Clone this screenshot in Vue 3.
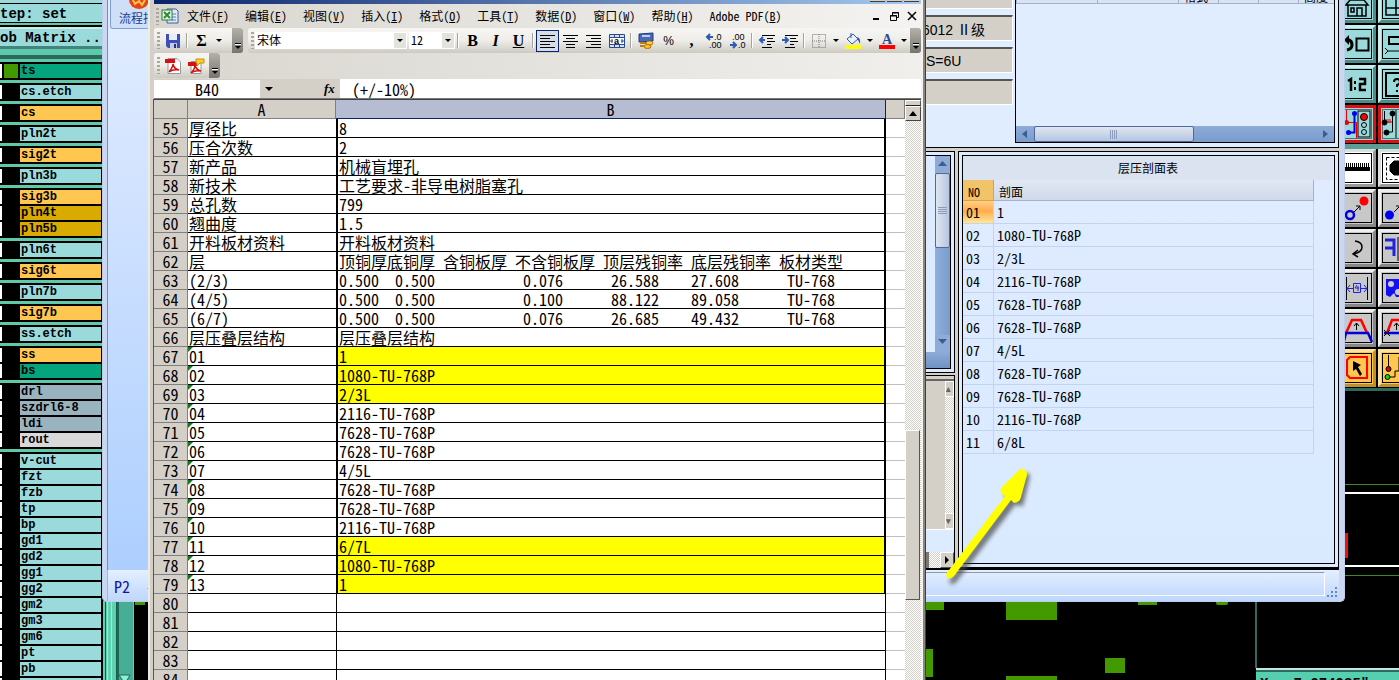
<script setup>
const layerGroups = [
  [['ts', 'signal']],
  [['cs.etch', 'plain']],
  [['cs', 'copper']],
  [['pln2t', 'plain']],
  [['sig2t', 'copper']],
  [['pln3b', 'plain']],
  [['sig3b', 'copper'], ['pln4t', 'power'], ['pln5b', 'power']],
  [['pln6t', 'plain']],
  [['sig6t', 'copper']],
  [['pln7b', 'plain']],
  [['sig7b', 'copper']],
  [['ss.etch', 'plain']],
  [['ss', 'copper'], ['bs', 'signal']],
  [['drl', 'drill'], ['szdrl6-8', 'drill'], ['ldi', 'drill'], ['rout', 'rout']],
  ['v-cut', 'fzt', 'fzb', 'tp', 'bp', 'gd1', 'gd2', 'gg1', 'gg2', 'gm2', 'gm3', 'gm6', 'pt', 'pb', ''].map((n) => [n, 'plain']),
]

const menus = [
  ['文件', 'F'], ['编辑', 'E'], ['视图', 'V'], ['插入', 'I'], ['格式', 'O'],
  ['工具', 'T'], ['数据', 'D'], ['窗口', 'W'], ['帮助', 'H'], ['Adobe PDF', 'B'],
]

const gap = (n) => ' '.repeat(n)
const board = (a, b, c) => '0.500' + gap(2) + '0.500' + gap(11) + a + gap(6) + b + gap(4) + c + gap(6) + 'TU-768'

const cells = [
  ['厚径比', '8'],
  ['压合次数', '2'],
  ['新产品', '机械盲埋孔'],
  ['新技术', '工艺要求-非导电树脂塞孔'],
  ['总孔数', '799'],
  ['翘曲度', '1.5'],
  ['开料板材资料', '开料板材资料'],
  ['层', '顶铜厚底铜厚 含铜板厚 不含铜板厚 顶层残铜率 底层残铜率 板材类型'],
  ['(2/3)', board('0.076', '26.588', '27.608')],
  ['(4/5)', board('0.100', '88.122', '89.058')],
  ['(6/7)', board('0.076', '26.685', '49.432')],
  ['层压叠层结构', '层压叠层结构'],
  ['01', '1'],
  ['02', '1080-TU-768P'],
  ['03', '2/3L'],
  ['04', '2116-TU-768P'],
  ['05', '7628-TU-768P'],
  ['06', '7628-TU-768P'],
  ['07', '4/5L'],
  ['08', '7628-TU-768P'],
  ['09', '7628-TU-768P'],
  ['10', '2116-TU-768P'],
  ['11', '6/7L'],
  ['12', '1080-TU-768P'],
  ['13', '1'],
  ['', ''], ['', ''], ['', ''], ['', ''], ['', ''],
]
const highlighted = [67, 68, 69, 77, 78, 79]
const rows = cells.map(([a, b], i) => {
  const no = 55 + i
  return { no, a, b, mark: no >= 67 && no <= 79, hot: highlighted.includes(no), tail: no > 79 }
})

const sections = ['1', '1080-TU-768P', '2/3L', '2116-TU-768P', '7628-TU-768P', '7628-TU-768P', '4/5L', '7628-TU-768P', '7628-TU-768P', '2116-TU-768P', '6/8L']
  .map((v, i) => [String(i + 1).padStart(2, '0'), v])
</script>

<template>
  <div class="desktop">
    <svg class="cad" width="1399" height="680" aria-hidden="true">
      <g fill="#439a00">
        <rect x="135" y="601" width="10" height="4" />
        <rect x="926" y="601" width="18" height="9" />
        <rect x="1006" y="601" width="51" height="19" />
        <rect x="926" y="649" width="7" height="28" />
        <rect x="1105" y="658" width="20" height="15" />
        <rect x="1006" y="676" width="51" height="4" />
        <rect x="1138" y="600" width="19" height="5" />
        <rect x="1216" y="600" width="12" height="5" rx="2" />
      </g>
      <path d="M1340 484.500H1399M1340 575.500H1399" stroke="#3f8a20" />
      <path d="M1340 493H1399M1340 566H1399" stroke="#fff" stroke-width="2" />
      <rect x="1340" y="533" width="8" height="25" fill="#f01010" />
      <path d="M1256 600V668" stroke="#2f6a60" stroke-width="2" />
      <rect x="103" y="601" width="31" height="79" fill="#5fd0b0" />
      <path d="M105.500 601V680M116.500 601V680" stroke="#175a4a" />
      <path d="M107.500 601V680M111.500 601V680" stroke="#8ff0d4" />
      <rect x="118" y="601" width="15" height="79" fill="#47ad95" />
      <path d="M118 601V680" stroke="#1d6a5a" stroke-width="2" />
      <path d="M119 675H130L125 684Z" fill="#8ff0d4" stroke="#1d6a5a" />
    </svg>

    <footer class="coords">X= &nbsp;7.974985"</footer>

    <aside class="matrix">
      <header>
        <div class="step">tep: set</div>
        <div class="matrix-title">ob Matrix ..</div>
      </header>
      <div v-for="(group, g) in layerGroups" :key="g" class="group">
        <div v-for="[name, kind] in group" :key="name" class="layer">
          <span class="mark"></span>
          <span class="flag" :class="{ on: name === 'ts' }"></span>
          <button class="layer-name" :class="kind">{{ name }}</button>
        </div>
      </div>
    </aside>

    <nav class="palette" aria-label="Tools">
      <div class="tools teal-tools">
        <button class="tool teal" aria-label="Home"><svg viewBox="0 0 38 38"><rect x="4.500" y="4.500" width="29" height="29" /><path d="M8 20L12 15H26L30 20ZM10 20V31H28V20M13 31M19 31V23H24V31M13 23H16V27H13Z" stroke-width="1.500" /></svg></button>
        <button class="tool teal" aria-label="Grid"><svg viewBox="0 0 38 38"><rect x="4.500" y="4.500" width="29" height="29" /><path d="M8 15V30H30M18 15V30M8 23H30" stroke-width="1.500" /></svg></button>
        <button class="tool teal" aria-label="Back"><svg viewBox="0 0 38 38"><rect x="4.500" y="4.500" width="29" height="29" /><path d="M8 15H11Q14 16 14 20T9 25" stroke-width="3" /><path d="M6 15L11 10V20Z" fill="#000" stroke="none" /><rect x="18.500" y="13.500" width="12" height="12" stroke-width="2" /></svg></button>
        <button class="tool teal" aria-label="Cut frame"><svg viewBox="0 0 38 38"><rect x="4.500" y="4.500" width="29" height="29" /><path d="M32 12H11V19H32" stroke-width="2" /><path d="M7 23L10 26H30M7 29L10 26" /></svg></button>
        <button class="tool teal" aria-label="Scale"><svg viewBox="0 0 38 38"><rect x="4.500" y="4.500" width="29" height="29" /><path d="M10 16L13 14V26M21 14H27V19H22V25H28" stroke-width="2.500" /><path d="M17 16V19M17 22V25" stroke-width="2" /></svg></button>
        <button class="tool teal" aria-label="Help"><svg viewBox="0 0 38 38"><rect x="4.500" y="4.500" width="29" height="29" /><rect x="8" y="8" width="23" height="23" stroke-width="2" /><path d="M16 17Q16 14 19 14T22 17Q22 19 19 20V22M19 25V27" stroke-width="2" /></svg></button>
        <button class="tool alert" aria-label="Net check"><svg viewBox="0 0 38 38"><rect x="4.500" y="4.500" width="29" height="29" stroke="#666" /><path d="M8.500 5V17.500H18.500V33" stroke="#e00" /><path d="M16.500 9V27.500H10" stroke="#00c" stroke-width="2" /><circle cx="8.500" cy="17.500" r="2.500" fill="#e00" stroke="none" /><circle cx="16.500" cy="8.500" r="2.500" fill="#00e" stroke="none" /><circle cx="10.500" cy="27.500" r="2.500" fill="#00e" stroke="none" /><rect x="20" y="6" width="12" height="26" /><circle cx="26" cy="12" r="3.500" fill="#f00" /><circle cx="26" cy="20" r="2.500" /><circle cx="26" cy="27" r="2.500" /></svg></button>
        <button class="tool alert" aria-label="Net compare"><svg viewBox="0 0 38 38"><rect x="4.500" y="4.500" width="29" height="29" stroke="#666" /><path d="M6.500 6V17M14.500 9V27H9M18 5V33" /><path d="M8 18V14M10 18V14M12 18V14M8 17H14" stroke="#e00" /><circle cx="6.500" cy="17.500" r="2.500" fill="#000" /><circle cx="14.500" cy="8.500" r="2.500" fill="#000" /><circle cx="8.500" cy="27.500" r="2.500" fill="#000" /></svg></button>
      </div>
      <div class="tools">
        <button class="tool white" aria-label="Measure"><svg viewBox="0 0 38 38"><rect x="4.500" y="4.500" width="29" height="29" /><path d="M6 20H32" stroke-width="4" /><path d="M6 16H32" stroke-width="4" stroke-dasharray="1 1" /></svg></button>
        <button class="tool white" aria-label="Pad"><svg viewBox="0 0 38 38"><rect x="4.500" y="4.500" width="29" height="29" /><rect x="8.500" y="8.500" width="22" height="22" stroke-dasharray="3 2" /><path d="M16 12H26V26H16L12 22V16Z" fill="#000" /></svg></button>
        <button class="tool" aria-label="Move"><svg viewBox="0 0 38 38"><rect x="4.500" y="4.500" width="29" height="29" /><circle cx="26" cy="12" r="4.500" fill="#f00" stroke="none" /><circle cx="12" cy="26" r="4" stroke="#00d" stroke-width="2.500" /><path d="M16 23L22 17M18 17H22V21" /></svg></button>
        <button class="tool" aria-label="Copy"><svg viewBox="0 0 38 38"><rect x="4.500" y="4.500" width="29" height="29" /><circle cx="11.500" cy="26" r="4.500" fill="#00e" stroke="none" /><path d="M16 23L22 17M18 17H22V21" /></svg></button>
        <button class="tool" aria-label="Rotate"><svg viewBox="0 0 38 38"><rect x="4.500" y="4.500" width="29" height="29" /><path d="M17 12Q24 13 24 18T16 25M20 21L15 25L20 28" stroke-width="1.500" /></svg></button>
        <button class="tool" aria-label="Mirror"><svg viewBox="0 0 38 38"><rect x="4.500" y="4.500" width="29" height="29" /><path d="M7 11H16V27M7 19H16" stroke="#22d" stroke-width="3" /><path d="M20 8V32" /></svg></button>
        <button class="tool" aria-label="Stretch"><svg viewBox="0 0 38 38"><rect x="4.500" y="4.500" width="29" height="29" /><path d="M8.500 8V31M29.500 8V31" /><path d="M15.500 14.500H22.500V23.500H15.500ZM9 19.500H15M23 19.500H29M12 16L9 19.500L12 23M26 16L29 19.500L26 23M17 19H21M19 16L17 19M20 17V22" stroke="#22d" /></svg></button>
        <button class="tool" aria-label="Surface"><svg viewBox="0 0 38 38"><rect x="4.500" y="4.500" width="29" height="29" /><path d="M8 10H26V28H18L16 24L12 28L8 26Z" fill="#11e" stroke="none" /><circle cx="13" cy="15" r="3" fill="#ccc" stroke="none" /><circle cx="20" cy="23" r="3" fill="#ccc" stroke="none" /></svg></button>
        <button class="tool" aria-label="Raise"><svg viewBox="0 0 38 38"><rect x="4.500" y="4.500" width="29" height="29" /><path d="M8 24L14 11H23L29 24" stroke="#f00" stroke-width="2.500" /><path d="M6 24H30L34 33M8 24L6 32" stroke="#00d" stroke-width="2.500" /><path d="M18.500 21V14M16 17L18.500 14L21 17" /></svg></button>
        <button class="tool" aria-label="Raise corner"><svg viewBox="0 0 38 38"><rect x="4.500" y="4.500" width="29" height="29" /><path d="M9 24L14 11H23L29 24" stroke="#f00" stroke-width="2.500" /><path d="M6 24H30" stroke="#00d" stroke-width="2.500" /><path d="M18.500 21V14M16 17L18.500 14L21 17M6 21L12 27M12 21L6 27" /></svg></button>
        <button class="tool amber" aria-label="Select"><svg viewBox="0 0 38 38"><rect x="4.500" y="4.500" width="29" height="29" /><path d="M12 8H29V29H12L9 26V11Z" stroke="#f00" stroke-width="2" /><path d="M15 12L23 16L20 18L24 25L22 27L18 20L15 22Z" fill="#000" stroke="none" /></svg></button>
        <button class="tool amber" aria-label="Route"><svg viewBox="0 0 38 38"><rect x="4.500" y="4.500" width="29" height="29" /><path d="M10.500 6V18M12 28H17V22H21V8" /><circle cx="10.500" cy="20" r="2.500" fill="#d00" /><circle cx="9.500" cy="28" r="2.500" fill="#0d0" /></svg></button>
      </div>
    </nav>

    <section class="blue-window">
      <div class="client">
        <div class="side">
          <button class="flow"><svg width="20" height="9" viewBox="0 0 20 9"><path d="M0 0A10 9 0 0 0 20 0Z" fill="#e8440c" /><path d="M4 0L6 4L10 1L13 5L16 0" fill="none" stroke="#ffc060" stroke-width="2" /></svg><span>流程指</span></button>
        </div>
        <div class="work">
          <div class="upper">
            <div class="fields">
              <input class="field" aria-label="等级编号" value="">
              <input class="field" aria-label="等级" value="6012 Ⅱ级">
              <input class="field short" aria-label="数量" value="S=6U">
              <input class="field" aria-label="备注" value="">
            </div>
            <div class="top-grid">
              <div class="top-head"><span></span><span></span><span>格式</span><span></span><span></span><span>高度</span></div>
              <div class="top-body"></div>
              <div class="hbar">
                <svg width="18" height="15"><path d="M11 4V12L6 8Z" fill="#3c5c94" /></svg>
                <div class="hthumb"><i></i></div>
                <svg width="18" height="15"><path d="M7 4V12L12 8Z" fill="#3c5c94" /></svg>
              </div>
            </div>
          </div>
          <div class="lower">
            <div class="left-col">
              <div class="box scroll-box">
                <div class="vbar">
                  <svg width="15" height="17"><path d="M3 10H12L7.500 5Z" fill="#3c5c94" /></svg>
                  <div class="vthumb"><i></i></div>
                  <div class="vrest"></div>
                  <svg width="15" height="17"><path d="M3 4H12L7.500 9Z" fill="#3c5c94" /></svg>
                  <div class="vfoot"></div>
                </div>
              </div>
              <div class="box grey-box">
                <div class="old-area">
                  <div class="old-bar"><b>▴</b><i></i><b>▾</b></div>
                </div>
                <div class="old-gap"></div>
                <div class="old-h"><i></i><button aria-label="Scroll right"><svg width="6" height="8"><path d="M1 0V8L5 4Z" /></svg></button></div>
              </div>
            </div>
            <div class="box section-box">
              <div class="section-inner">
                <h2>层压剖面表</h2>
                <table class="section-table">
                  <thead><tr><th>NO</th><th>剖面</th></tr></thead>
                  <tbody>
                    <tr v-for="[no, value] in sections" :key="no"><td>{{ no }}</td><td>{{ value }}</td></tr>
                  </tbody>
                </table>
              </div>
            </div>
          </div>
        </div>
      </div>
      <div class="status">
        <span class="page">P2 &nbsp;-</span>
        <div class="status-cell"></div>
        <svg width="14" height="14"><g fill="#6b86b8"><rect x="10" y="2" width="2" height="2" /><rect x="6" y="6" width="2" height="2" /><rect x="10" y="6" width="2" height="2" /><rect x="2" y="10" width="2" height="2" /><rect x="6" y="10" width="2" height="2" /><rect x="10" y="10" width="2" height="2" /></g></svg>
      </div>
    </section>

    <section class="excel">
      <div class="titlebar"><i></i><i></i><i></i></div>
      <nav class="menubar">
        <i class="grip"></i>
        <svg class="book" width="18" height="18" viewBox="0 0 18 18"><path d="M6 2H15L17 4V16H6Z" fill="#dfe9fb" stroke="#3a5fae" /><path d="M11 7H15M11 10H15M11 13H15" stroke="#5a7fce" /><rect x="1" y="3" width="10" height="10" fill="#e9f5e6" stroke="#2c7a34" /><path d="M3 5L9 11M9 5L3 11" stroke="#2c8a34" stroke-width="2" /></svg>
        <button v-for="[label, key] in menus" :key="label" class="menu">{{ label }}(<u>{{ key }}</u>)</button>
        <span class="grow"></span>
        <button class="winbtn" aria-label="Minimize"><svg width="10" height="10"><path d="M2 8H8" stroke="#000" stroke-width="2" /></svg></button>
        <button class="winbtn" aria-label="Restore"><svg width="10" height="10"><path d="M3.500 4V1.500H9.500V6.500H7M1.500 4.500H7.500V9.500H1.500ZM1 5H8M3 2H10" fill="none" stroke="#000" /></svg></button>
        <button class="winbtn" aria-label="Close"><svg width="10" height="10"><path d="M1 1L9 9M9 1L1 9" stroke="#000" stroke-width="1.500" /></svg></button>
      </nav>

      <div class="toolbars">
        <div class="bar std">
          <i class="grip"></i>
          <button class="tb" aria-label="Save"><svg width="16" height="16"><path d="M1 1H15V15H3L1 13Z" fill="#3c50b8" /><rect x="4" y="1" width="8" height="6" fill="#e8ecfa" /><rect x="5" y="10" width="7" height="5" fill="#c8cce0" /><rect x="9" y="11" width="2" height="4" fill="#223080" /></svg></button>
          <i class="sep"></i>
          <button class="tb sum">Σ</button>
          <i class="caret"></i>
          <span class="grow"></span>
          <i class="more double"></i>
        </div>
        <div class="bar fmt">
          <i class="grip"></i>
          <div class="combo font"><span>宋体</span><b><i class="caret"></i></b></div>
          <div class="combo size"><span>12</span><b><i class="caret"></i></b></div>
          <i class="sep"></i>
          <button class="tb serif"><b>B</b></button>
          <button class="tb serif"><b><em>I</em></b></button>
          <button class="tb serif"><b><u>U</u></b></button>
          <i class="sep"></i>
          <button class="tb active" aria-label="Align left"><svg width="16" height="14"><path d="M0 1.500H15M0 4.500H10M0 7.500H15M0 10.500H10M0 13.500H15" stroke="#000" /></svg></button>
          <button class="tb" aria-label="Center"><svg width="16" height="14"><path d="M0 1.500H15M3 4.500H12M0 7.500H15M3 10.500H12M3 13.500H12" stroke="#000" /></svg></button>
          <button class="tb" aria-label="Align right"><svg width="16" height="14"><path d="M0 1.500H15M5 4.500H15M0 7.500H15M5 10.500H15M0 13.500H15" stroke="#000" /></svg></button>
          <button class="tb" aria-label="Merge"><svg width="16" height="16"><path d="M.5 1.500H15.500V14.500H.5ZM5.500 1V4M10.500 1V4M5.500 12V15M10.500 12V15" fill="#cfe0f8" stroke="#2c4a8a" /><rect x="1" y="5" width="14" height="6" fill="#fff" /><path d="M.5 4.500H15.500M.5 11.500H15.500M1 8H4M12 8H15M3 6V10M13 6V10" stroke="#2c4a8a" /><text x="5" y="11" font-size="9" font-weight="700">a</text></svg></button>
          <i class="sep"></i>
          <button class="tb" aria-label="Currency"><svg width="16" height="16"><path d="M1 1L15 0V8L1 9Z" fill="#4a6ab8" stroke="#1d3a80" /><path d="M4 3L12 3" stroke="#b8d0f8" stroke-width="2" /><path d="M2 10H8M2 13H6" stroke="#b88010" stroke-width="2" /><ellipse cx="11.500" cy="10" rx="3.500" ry="2" fill="#ffd040" stroke="#b07010" /><ellipse cx="9.500" cy="13.500" rx="3.500" ry="2" fill="#ffc020" stroke="#b07010" /></svg></button>
          <button class="tb pct">%</button>
          <button class="tb serif"><b>,</b></button>
          <button class="tb" aria-label="Increase decimal"><svg width="18" height="16"><path d="M1 4H7M4 1L1 4L4 7" fill="none" stroke="#2c5ab8" stroke-width="2" /><text x="8" y="7" font-size="9">.0</text><text x="3" y="15" font-size="9">.00</text></svg></button>
          <button class="tb" aria-label="Decrease decimal"><svg width="18" height="16"><path d="M1 12H7M4 9L7 12L4 15" fill="none" stroke="#2c5ab8" stroke-width="2" /><text x="3" y="7" font-size="9">.00</text><text x="9" y="15" font-size="9">.0</text></svg></button>
          <i class="sep"></i>
          <button class="tb" aria-label="Outdent"><svg width="16" height="14"><path d="M3 1.500H16M8 4.500H14M8 7.500H16M8 10.500H12M3 13.500H13" stroke="#000" /><path d="M1 6H6M4 3L1 6L4 9" fill="none" stroke="#2c5ab8" stroke-width="2" /></svg></button>
          <button class="tb" aria-label="Indent"><svg width="16" height="14"><path d="M3 1.500H16M8 4.500H14M8 7.500H16M8 10.500H12M3 13.500H13" stroke="#000" /><path d="M0 6H5M3 3L6 6L3 9" fill="none" stroke="#2c5ab8" stroke-width="2" /></svg></button>
          <i class="sep"></i>
          <button class="tb" aria-label="Borders"><svg width="14" height="14"><path d="M.5 .5H13.500V13.500H.5ZM7 0V14M0 7H14" fill="none" stroke="#777" stroke-dasharray="1 1" /></svg></button>
          <i class="caret"></i>
          <button class="tb" aria-label="Fill colour"><svg width="16" height="16"><path d="M2 6L8 1L13 6L7 11Z" fill="#e8f0fc" stroke="#3a5aa0" /><path d="M12 4Q16 5 15 11L13 7Z" fill="#2c5ab8" /><path d="M6 5V0" stroke="#3a5aa0" /><rect y="12" width="16" height="4" fill="#ff0" /></svg></button>
          <i class="caret"></i>
          <button class="tb" aria-label="Font colour"><svg width="16" height="16"><text x="3" y="11" font-size="14" font-weight="700" fill="#2c4a9a" class="serif">A</text><rect y="12" width="16" height="4" fill="#f00" /></svg></button>
          <i class="caret"></i>
          <span class="grow"></span>
          <i class="more"></i>
        </div>
      </div>
      <div class="toolbars second">
        <div class="bar pdf">
          <i class="grip"></i>
          <button class="tb" aria-label="PDF"><svg width="16" height="16"><path d="M3 .5H12L15.500 4V15.500H3Z" fill="#fff" stroke="#999" /><rect y="1" width="10" height="4" fill="#d81010" /><path d="M4 14Q8 9 8 6Q9 11 14 12Q8 11 4 14" fill="none" stroke="#d81010" stroke-width="1.500" /></svg></button>
          <button class="tb" aria-label="PDF mail"><svg width="16" height="16"><path d="M3 3.500H13V15.500H3Z" fill="#fff" stroke="#999" /><rect y="4" width="9" height="4" fill="#d81010" /><path d="M3 15Q7 11 7 7Q8 12 13 13Q7 12 3 15" fill="none" stroke="#d81010" stroke-width="1.500" /><path d="M8 1H16V5H12L9 8V5H8Z" fill="#ffd020" stroke="#c09010" /></svg></button>
          <span class="grow"></span>
          <i class="more"></i>
        </div>
      </div>

      <div class="formula">
        <input class="namebox" aria-label="名称框" value="B40">
        <i class="caret big"></i>
        <span class="grow"></span>
        <em class="fx">fx</em>
        <input class="content" aria-label="编辑栏" value="(+/-10%)">
      </div>

      <div class="sheet">
        <table>
          <colgroup><col class="c-no"><col class="c-a"><col class="c-b"><col></colgroup>
          <thead><tr><th></th><th>A</th><th class="sel">B</th><th></th></tr></thead>
          <tbody>
            <tr v-for="r in rows" :key="r.no" :class="{ tail: r.tail }">
              <th>{{ r.no }}</th>
              <td :class="{ tick: r.mark }">{{ r.a }}</td>
              <td class="b" :class="{ hot: r.hot }">{{ r.b }}</td>
              <td class="c"></td>
            </tr>
          </tbody>
        </table>
        <div class="sheet-bar">
          <span class="split"></span>
          <button aria-label="Scroll up"><svg width="8" height="5"><path d="M0 5H8L4 0Z" /></svg></button>
          <div class="track"><div class="thumb"></div></div>
        </div>
      </div>
    </section>

    <svg class="arrow" width="100" height="130" viewBox="0 0 100 130" aria-hidden="true">
      <path d="M5 114L8 118L13 114L71 38L79 39L86 9L84 6L80 7L60 27L64 33Z" transform="translate(4 4)" fill="#444" class="shade" />
      <path d="M6 111Q7 119 14 113L71 37L74 40Q80 39 81 34L87 12Q87 5 80 6L61 25Q59 30 65 33Z" fill="#ff0" />
    </svg>
  </div>
</template>

<style>
html, body { margin: 0; background: #000; overflow: hidden; }
</style>

<style scoped>
* { box-sizing: border-box; }
.desktop { position: relative; height: 100vh; min-height: 680px; overflow: hidden; background: #000; font-family: "Noto Sans CJK SC", sans-serif; font-feature-settings: "hwid"; font-size: 12px; color: #000; }
button { margin: 0; padding: 0; border: 0; background: none; font: inherit; font-feature-settings: inherit; color: inherit; }
input { font: inherit; font-feature-settings: inherit; color: inherit; border: 0; margin: 0; padding: 0; border-radius: 0; min-width: 0; outline: 0; }
svg { display: block; flex: none; }
.grow { flex: 1; }
.serif { font-family: "Liberation Serif", serif; }
.cad { position: absolute; left: 0; top: 0; }
.coords { position: absolute; left: 1256px; right: 0; top: 668px; height: 24px; background: #56cfb0; border-top: 2px solid #c5e8da; box-shadow: inset 0 2px #2f6a60; padding: 4px 4px; font: bold 14px/20px "Liberation Mono", monospace; }

.matrix { position: absolute; left: 0; top: 0; width: 102px; height: 100%; overflow: hidden; background: #5fc9aa; display: flex; flex-direction: column; gap: 3px; font-family: "Liberation Mono", monospace; }
.matrix header { background: #5fc9aa; height: 59px; flex: none; border-top: 3px solid #9bdada; border-bottom: 4px solid #2b6a5c; }
.step { height: 20px; background: #9bdada; border-top: 1px solid #000; border-bottom: 1px solid #000; font-size: 14px; line-height: 20px; font-weight: bold; white-space: pre; }
.matrix-title { height: 24px; margin-top: 2px; background: #9bdada; border-top: 2px solid #000; border-bottom: 3px solid #40857e; font-size: 14px; line-height: 22px; font-weight: bold; white-space: nowrap; box-shadow: inset 0 2px #c9eeea; }
.group { background: #000; padding: 2px 1px 2px 0; display: flex; flex-direction: column; gap: 2px; flex: none; }
.layer { display: flex; height: 14px; }
.mark { width: 2px; background: #fff; }
.flag { width: 18px; border: 0 solid #000; border-width: 0 2px; }
.flag.on { background: #439a00; }
.layer-name { flex: 1; text-align: left; font-size: 12px; line-height: 14px; font-weight: bold; padding-left: 1px; background: #9bdada; }
.layer-name.copper { background: #ffc74f; }
.layer-name.power { background: #d9ab00; }
.layer-name.signal { background: #04a57c; }
.layer-name.drill { background: #9ab4bf; }
.layer-name.rout { background: #d9d9d9; }

.palette { position: absolute; left: 1338px; top: 0; width: 78px; background: #000; border-bottom: 3px solid #2b6a5c; }
.tools { display: grid; grid-template-columns: 38px 38px; grid-auto-rows: 38px; gap: 2px; padding-bottom: 1px; }
.teal-tools { margin-top: -15px; border-bottom: 5px solid #5a9f95; }
.tool { background: #c8c8c8; border: 3px solid; border-color: #eee #888 #888 #eee; }
.tool svg { width: 38px; height: 38px; margin: -3px; fill: none; stroke: #000; }
.tool.teal { background: #9bdada; border-color: #c9f0ee #4e8d88 #4e8d88 #c9f0ee; }
.tool.alert { background: #9bdada; border-color: #d41414; }
.tool.white { background: #fff; border-color: #ddd #999 #999 #ddd; }
.tool.amber { background: #ffc74f; border-color: #ffe29a #c09030 #c09030 #ffe29a; }

.blue-window { position: absolute; left: 102px; right: 54px; top: 0; height: 602px; background: #c9d8f0; border: solid #bdcdea; border-width: 0 1px 1px; border-radius: 0 0 5px 5px; padding: 0 5px 0 4px; display: flex; flex-direction: column; }
.client { flex: 1; display: flex; min-height: 0; background: linear-gradient(#e2eeff, #d6e5ff 25%, #adcfff); border: solid #6a8fd0; border-width: 0 0 0 1px; }
.side { width: 818px; flex: none; }
.flow { width: 50px; height: 29px; border: 1px solid #7f9fdc; border-top: 0; border-radius: 0 0 3px 3px; background: #cfdff8; color: #1c3c94; display: flex; flex-direction: column; padding-left: 4px; margin-left: 2px; line-height: 17px; }
.flow svg { margin-left: 14px; }
.work { flex: 1; background: #d4d0c8; display: flex; flex-direction: column; gap: 3px; min-width: 0; border-bottom: 2px solid #000; }
.upper { height: 148px; display: flex; background: #e0edff; border: solid #000; border-width: 0 1px 1px 0; padding-right: 3px; flex: none; }
.fields { width: 89px; display: flex; flex-direction: column; gap: 6px; margin-top: -17px; flex: none; }
.field { width: 87px; height: 26px; background: #d4d0c8; border: solid #555; border-width: 2px 1px 1px 0; border-color: #555 #fff #fff; font-family: "Liberation Sans", "Noto Sans CJK SC", sans-serif; font-size: 14px; text-indent: -4px; }
.field.short { text-indent: 0; }
.top-grid { flex: 1; height: 143px; border: solid #000; border-width: 0 1px 1px; display: flex; flex-direction: column; }
.top-head { height: 4px; overflow: hidden; background: #dbe3f0; border-bottom: 1px solid #9fb2d4; display: grid; grid-template-columns: repeat(2, 81px) repeat(3, 40px) 1fr; flex: none; }
.top-head span { border-left: 1px solid #9fb2d4; line-height: 18px; margin-top: -12px; padding-left: 5px; height: 18px; }
.top-body { flex: 1; }
.hbar { height: 16px; background: linear-gradient(#8fabd8, #7a9ccb); display: flex; justify-content: space-between; }
.hthumb, .vthumb { background: linear-gradient(#dfe6f2, #b5c6df); border: 1px solid #51689a; border-radius: 2px; display: flex; align-items: center; justify-content: center; }
.hthumb { width: 160px; margin-right: auto; }
.hthumb i { width: 8px; height: 9px; background: repeating-linear-gradient(90deg, #8b9dbb 0 1px, transparent 1px 2px); }
.lower { flex: 1; display: flex; gap: 3px; min-height: 0; }
.left-col { width: 29px; display: flex; flex-direction: column; gap: 2px; flex: none; }
.box { background: #dcebff; border: 1px solid #000; padding: 3px; }
.left-col .box { border-left: 0; padding-left: 0; }
.scroll-box { height: 222px; flex: none; }
.vbar { height: 100%; border: 1px solid #000; border-left: 0; padding-left: 9px; display: flex; flex-direction: column; background: linear-gradient(90deg, #dcebff 9px, #8fabd8 9px); }
.vthumb { height: 75px; background: linear-gradient(90deg, #dfe6f2, #b5c6df); }
.vthumb i { width: 9px; height: 8px; background: repeating-linear-gradient(#8b9dbb 0 1px, transparent 1px 2px); }
.vrest { flex: 1; background: linear-gradient(90deg, #8fb0df, #7a9ccb); }
.vfoot { height: 16px; margin-left: -9px; background: linear-gradient(#8fabd8, #6f92c4); }
.grey-box { flex: 1; display: flex; flex-direction: column; background: #d4d0c8; border-bottom: 0; }
.grey-box.box { padding: 3px 0 0; }
.old-area { height: 151px; border-top: 2px solid #666; border-bottom: 1px solid #fff; display: flex; justify-content: flex-end; }
.old-bar { width: 9px; display: flex; flex-direction: column; }
.old-bar b { height: 16px; background: #d4d0c8; border: 1px solid #fff; font-size: 9px; line-height: 13px; color: #666; overflow: hidden; }
.old-bar i, .old-h i { flex: 1; background: repeating-conic-gradient(#fff 0 25%, #d4d0c8 0 50%) 0 0 / 2px 2px; }
.old-gap { height: 22px; background: #dcebff; }
.old-h { display: flex; height: 16px; }
.old-h i { border-left: 3px solid #777; }
.old-h button { width: 14px; background: #d4d0c8; border: 1px solid; border-color: #fff #555 #555 #fff; display: grid; place-items: center; }
.section-box { flex: 1; min-width: 0; }
.section-inner { height: 100%; border: 1px solid #000; background: linear-gradient(#e0ebff, #d9eaff); padding-right: 1px; }
h2 { margin: 0; height: 24px; font-size: 12px; font-weight: normal; line-height: 24px; text-align: center; background: #dbe3f1; }
.section-table { border-collapse: separate; border-spacing: 0; width: 351px; table-layout: fixed; }
.section-table th { height: 21px; padding: 3px 0 0 5px; font-weight: normal; text-align: left; line-height: 17px; background: linear-gradient(#e2e8f4, #cfd9e8); border: solid #9fb2d4; border-width: 0 1px 1px 0; }
.section-table th:first-child { width: 31px; background: #f2c46a; border-color: #e0a040; }
.section-table td { height: 23px; padding: 0 0 0 3px; font-size: 14px; line-height: 22px; border: solid #c3d5ee; border-width: 0 1px 1px 0; }
.section-table tr:first-child td:first-child { background: linear-gradient(#ffd08a, #ffad4a 45%, #ffe79a); }
.status { height: 31px; display: flex; align-items: flex-end; background: linear-gradient(#e4efff, #bdd7fc); border-left: 1px solid #9fb8e0; flex: none; }
.page { width: 41px; padding-left: 6px; align-self: center; font-size: 16px; color: #1414a0; white-space: nowrap; overflow: hidden; }
.status-cell { flex: 1; height: 24px; margin-bottom: 5px; border: 1px solid; border-color: #8a9ab5 #fff #fff #8a9ab5; }
.status svg { margin-bottom: 2px; }

.excel { position: absolute; left: 148px; top: 0; width: 778px; height: 100%; background: #d4d0c8; border-left: 2px solid #eceae4; border-right: 1px solid #404040; padding: 0 4px 0 4px; box-shadow: inset -2px 0 #8a8780, inset -4px 0 #f4f2ee; display: flex; flex-direction: column; font-size: 12px; }
.titlebar { height: 4px; background: linear-gradient(90deg, #0a246a, #a6caf0); flex: none; display: flex; justify-content: flex-end; gap: 2px; padding: 0 2px 2px 0; }
.titlebar i { width: 15px; background: #d4d0c8; border-bottom: 1px solid #404040; }
.menubar { height: 24px; display: flex; align-items: center; padding-left: 2px; background: linear-gradient(90deg, #d9d6cf, #f4f3f1); flex: none; }
.menu { padding: 0 8px; white-space: pre; line-height: 22px; }
.book { margin: 0 0 0 1px; }
.winbtn { width: 18px; display: grid; place-items: center; }
.grip { width: 3px; height: 17px; margin: 0 1px 0 0; background: repeating-linear-gradient(#aaa69c 0 2px, transparent 2px 4px); flex: none; }
.toolbars { height: 25px; display: flex; gap: 5px; background: linear-gradient(90deg, #d9d6cf, #f0efec); flex: none; }
.second { height: 26px; padding-bottom: 1px; }
.bar { display: flex; align-items: center; padding-left: 3px; background: linear-gradient(#f7f6f3, #eeede9 50%, #cdcac2); border-radius: 3px; }
.std { width: 89px; }
.fmt { flex: 1; }
.pdf { width: 66px; }
.tb { width: 23px; height: 22px; display: grid; place-items: center; font-size: 16px; line-height: 20px; flex: none; }
.tb svg { overflow: visible; font-family: "Liberation Sans", sans-serif; font-feature-settings: normal; }
.tb svg .serif { font-family: "Liberation Serif", serif; }
.tb.active { border: 1px solid #0a246a; background: #d6dbe8; }
.sum { font-family: "Liberation Serif", serif; font-weight: bold; }
.pct { font-family: "Liberation Sans", sans-serif; font-size: 12px; }
.sep { width: 6px; height: 15px; flex: none; background: linear-gradient(90deg, transparent 2px, #a6a39a 2px 3px, #fff 3px 4px, transparent 4px); }
.caret { width: 11px; flex: none; display: grid; place-items: center; }
.caret::before { content: ""; border: 3px solid transparent; border-top-color: #000; border-bottom: 0; }
.caret.big::before { border-width: 4px 4px 0; }
.more { width: 11px; height: 25px; background: linear-gradient(#b4b1aa, #77756f); border-radius: 0 3px 3px 0; flex: none; display: flex; flex-direction: column; align-items: center; justify-content: flex-end; padding-bottom: 4px; }
.more::before { content: ""; width: 6px; height: 1px; background: #000; border-bottom: 1px solid #fff; box-sizing: content-box; margin-bottom: 1px; }
.more::after { content: ""; border: 3px solid transparent; border-top-color: #000; border-bottom: 0; }
.combo { background: #fff; height: 17px; display: flex; line-height: 15px; flex: none; }
.combo span { flex: 1; padding-left: 2px; }
.combo b { width: 12px; margin: 1px; background: #e4e2dc; display: grid; place-items: center; }
.font { width: 152px; margin-right: 2px; }
.size { width: 46px; }
.formula { height: 20px; display: flex; align-items: center; border-bottom: 1px solid #777; flex: none; font-size: 16px; }
.namebox { width: 106px; height: 18px; text-align: center; background: #fff; }
.caret.big { margin-left: 3px; }
.fx { width: 16px; font: italic bold 13px "Liberation Serif", serif; }
.content { width: 581px; height: 19px; background: #fff; padding-left: 12px; }
.sheet { flex: 1; display: flex; min-height: 0; border-top: 1px solid #404040; margin-left: -1px; border-left: 1px solid #555; align-items: stretch; overflow: hidden; }
.sheet table { border-collapse: separate; border-spacing: 0; table-layout: fixed; width: 751px; height: max-content; background: #fff; font-size: 16px; flex: none; }
.c-no { width: 34px; }
.c-a { width: 148px; }
.c-b { width: 550px; }
.sheet th { height: 19px; padding: 0; font-weight: normal; line-height: 18px; background: #d4d0c8; border: solid #808080; border-width: 0 1px 1px 0; }
.sheet th.sel { background: #b6bdd2; border-color: #0a246a; }
.sheet td { position: relative; height: 19px; padding: 0 0 0 1px; line-height: 18px; white-space: pre; border-bottom: 1px solid #000; }
.sheet td.b { border-left: 2px solid #000; border-right: 2px solid #000; }
.sheet td.c { border-bottom-color: #c0c0c0; }
.sheet .tail td.b { border-left-width: 1px; border-right-width: 1px; }
.sheet td.hot { background: #ff0; }
.tick::before { content: ""; position: absolute; left: 0; top: 0; border: solid transparent; border-width: 0 5px 5px 0; border-top: 5px solid #0a7a1a; border-bottom: 0; }
.sheet-bar { width: 16px; flex: none; display: flex; flex-direction: column; background: #d4d0c8; }
.split { height: 6px; border: 1px solid; border-color: #fff #555 #222 #fff; }
.sheet-bar button { height: 15px; border: 1px solid; border-color: #fff #444 #444 #fff; display: grid; place-items: center; }
.track { flex: 1; background: repeating-conic-gradient(#fff 0 25%, #d4d0c8 0 50%) 0 0 / 2px 2px; padding: 309px 1px 0 0; }
.thumb { height: 170px; background: #d4d0c8; border: 1px solid; border-color: #fff #555 #555 #fff; }
.arrow { position: absolute; left: 940px; top: 463px; }
.shade { filter: blur(2px); opacity: .7; }
</style>
